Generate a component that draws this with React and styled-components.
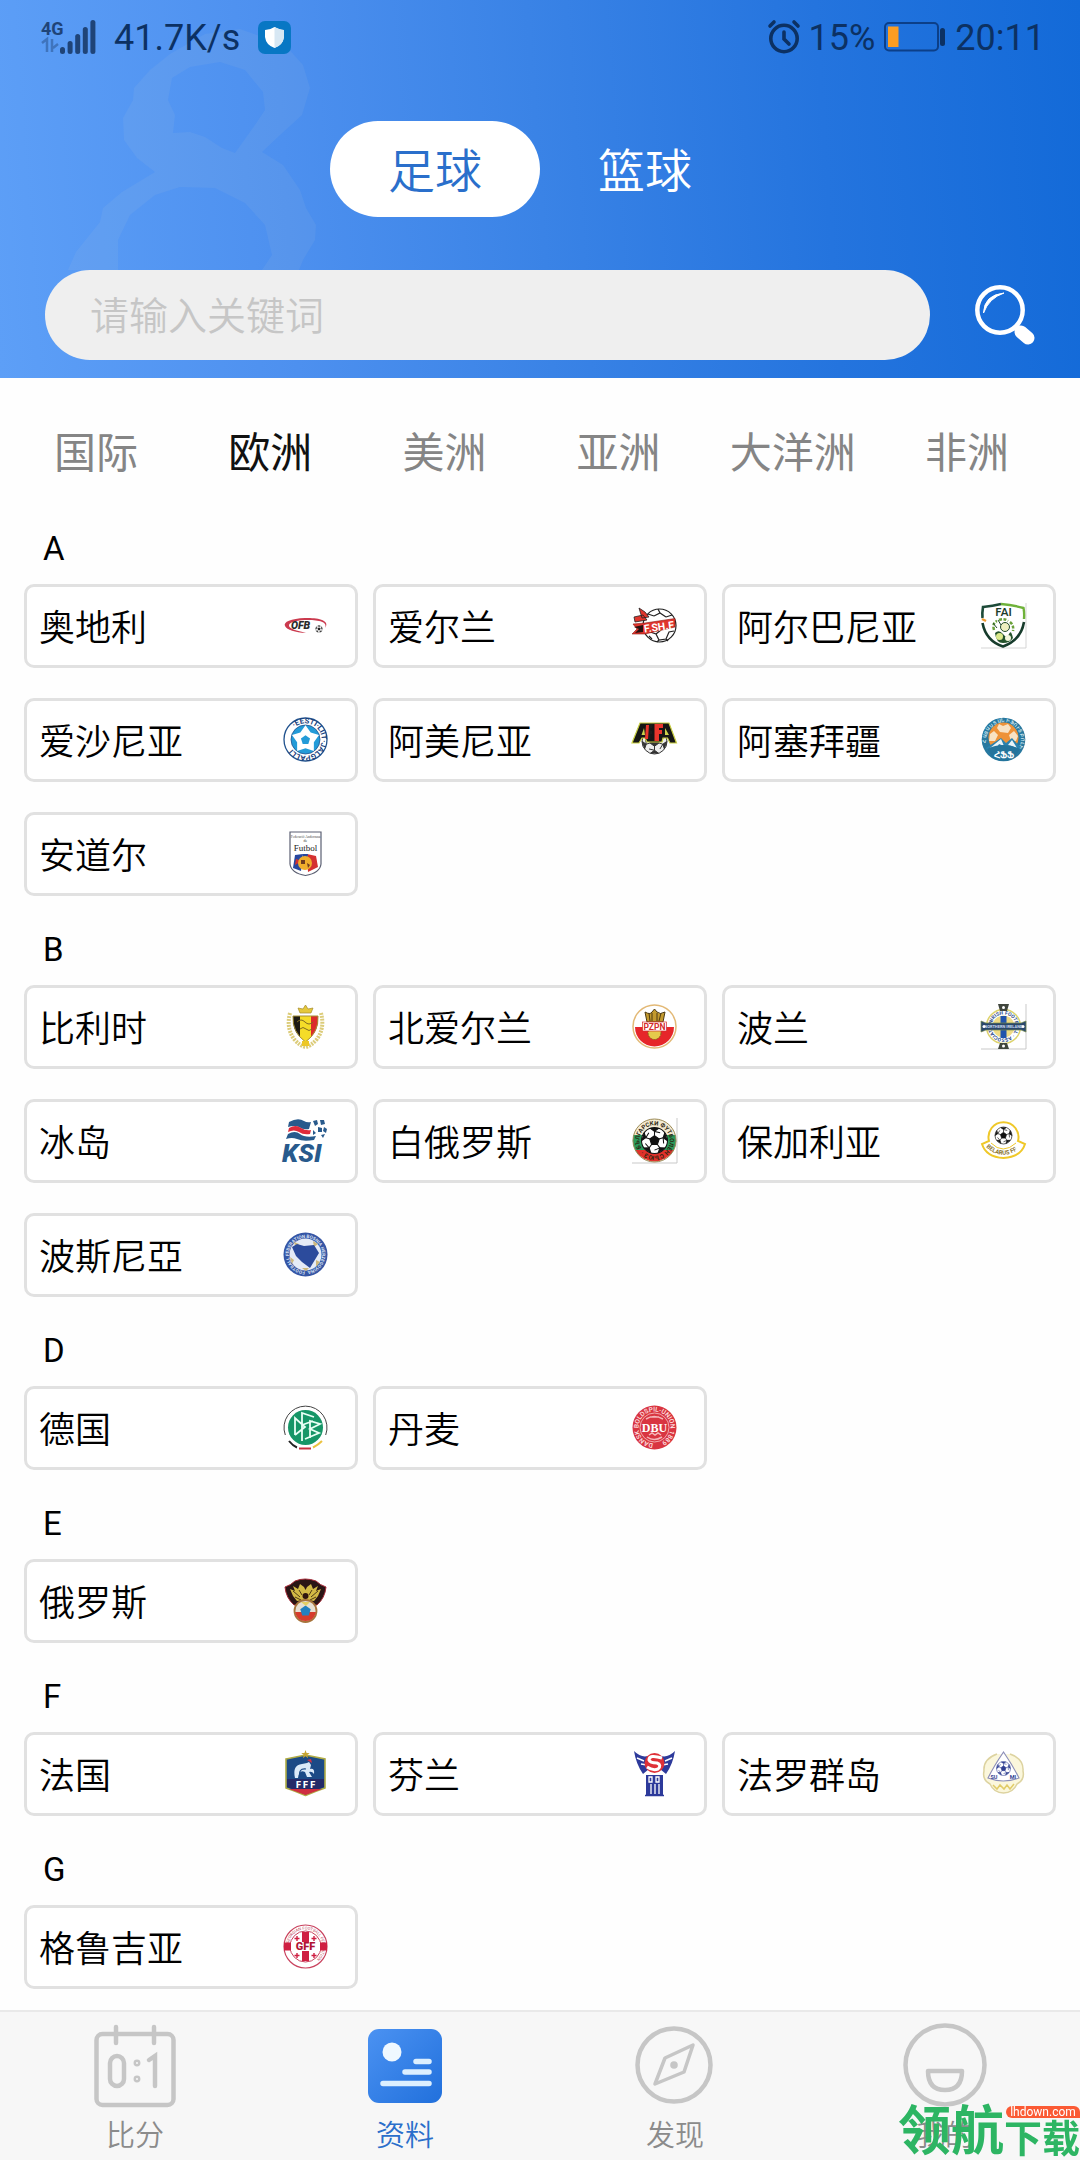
import React, { useState } from "react";
import styled, { createGlobalStyle } from "styled-components";

const GlobalStyle = createGlobalStyle`
  * { box-sizing: border-box; }
  body {
    margin: 0;
    background: #fefefe;
    font-family: Roboto, "Noto Sans CJK SC", sans-serif;
  }
  button, input { font: inherit; }
`;

const Page = styled.div`
  position: relative;
  min-height: 100vh;
  display: flex;
  flex-direction: column;
`;

const Header = styled.header`
  position: relative;
  background: linear-gradient(86deg, #5d9ff7 0%, #4d90ef 27%, #3a83e6 50%, #2474de 76%, #136ad8 100%);
  padding-bottom: 18px;
`;

const Backdrop = styled.svg`
  position: absolute;
  left: 0;
  top: 0;
  pointer-events: none;
`;

const StatusBar = styled.div`
  position: relative;
  height: 74px;
  padding: 0 35px 0 40px;
  display: flex;
  align-items: center;
  justify-content: space-between;
  font-size: 36px;
  color: #0c3163;
`;

const StatusGroup = styled.div`
  display: flex;
  align-items: center;
  gap: ${(p) => p.$gap}px;
  svg { display: block; overflow: visible; }
  span { padding-top: 2px; }
`;

const SportSwitch = styled.div`
  position: relative;
  display: flex;
  justify-content: center;
  margin-top: 47px;
`;

const SportButton = styled.button`
  width: 210px;
  height: 96px;
  border: 0;
  border-radius: 48px;
  padding: 0 0 4px;
  font-size: 47px;
  font-weight: 350;
  background: ${(p) => (p.$active ? "#fff" : "transparent")};
  color: ${(p) => (p.$active ? "#2a6fcb" : "#fff")};
`;

const SearchForm = styled.form`
  position: relative;
  display: flex;
  align-items: center;
  gap: 45px;
  margin-top: 53px;
  padding: 0 45px;
`;

const SearchInput = styled.input`
  flex: 1;
  min-width: 0;
  height: 90px;
  border: 0;
  border-radius: 45px;
  padding: 4px 45px 0;
  font-size: 39px;
  font-weight: 350;
  color: #333;
  background: #efefef;
  &::placeholder { color: #c6c6c6; opacity: 1; }
`;

const SearchButton = styled.button`
  width: 60px;
  height: 60px;
  padding: 0;
  border: 0;
  background: none;
  svg { display: block; }
`;

const RegionTabs = styled.nav`
  display: grid;
  grid-template-columns: repeat(6, 1fr);
  height: 148px;
  padding: 0 26px 0 9px;
`;

const RegionTab = styled.button`
  border: 0;
  padding: 0 0 6px;
  background: none;
  white-space: nowrap;
  font-size: 42px;
  font-weight: 400;
  color: ${(p) => (p.$active ? "#111" : "#858585")};
`;

const Main = styled.main`
  flex: 1;
  display: flex;
  flex-direction: column;
  gap: 34px;
  padding: 3px 24px 20px;
`;

const Group = styled.section`
  display: flex;
  flex-direction: column;
  gap: 15px;
`;

const GroupTitle = styled.h2`
  margin: 0;
  padding-left: 19px;
  font-size: 33px;
  line-height: 40px;
  font-weight: 400;
  color: #000;
`;

const CardGrid = styled.div`
  display: grid;
  grid-template-columns: repeat(3, 1fr);
  gap: 30px 15px;
`;

const Card = styled.button`
  height: 84px;
  display: flex;
  align-items: center;
  justify-content: space-between;
  padding: 0 27px 2px 12px;
  border: 3px solid #e1e1e1;
  border-radius: 10px;
  background: #fff;
  font-size: 36px;
  font-weight: 350;
  color: #000;
  svg { display: block; flex: none; overflow: visible; }
`;

const TabBar = styled.nav`
  position: sticky;
  bottom: 0;
  display: grid;
  grid-template-columns: repeat(4, 1fr);
  height: 150px;
  border-top: 2px solid #e9e9e9;
  background: #f7f7f7;
`;

const TabLink = styled.a`
  display: flex;
  flex-direction: column;
  align-items: center;
  padding-top: 10px;
  text-decoration: none;
  font-size: 29px;
  line-height: 40px;
  font-weight: 350;
  color: ${(p) => (p.$active ? "#2a6fcb" : "#8b8b8b")};
  svg { display: block; margin-bottom: 6px; }
`;

const Stamp = styled.div`
  position: absolute;
  right: 0;
  bottom: 0;
  display: flex;
  align-items: flex-end;
  height: 56px;
  font-weight: 700;
  line-height: 1;
  color: #2db563;
  white-space: nowrap;
  pointer-events: none;
`;

const StampBig = styled.span`
  font-size: 53px;
  line-height: 56px;
`;

const StampSide = styled.span`
  display: flex;
  flex-direction: column;
  align-items: stretch;
`;

const StampTag = styled.span`
  align-self: flex-end;
  width: 74px;
  height: 12px;
  border-radius: 6px 6px 0 6px;
  background: #fb5a34;
  color: #fff;
  font: 400 12px/12px Roboto, sans-serif;
  text-align: center;
`;

const StampSmall = styled.span`
  font-size: 38px;
  line-height: 42px;
`;

const pt = (cx, cy, r, deg) => {
  const a = ((deg - 90) * Math.PI) / 180;
  return [cx + r * Math.cos(a), cy + r * Math.sin(a)];
};
const poly = (cx, cy, r, n = 5, rot = 0) =>
  Array.from({ length: n }, (_, i) => pt(cx, cy, r, rot + (i * 360) / n).join(",")).join(" ");
const star = (cx, cy, r, inner) =>
  Array.from({ length: 10 }, (_, i) => pt(cx, cy, i % 2 ? inner : r, i * 36).join(",")).join(" ");

function Ball({ cx, cy, r, ink = "#111", fill = "#fff", rot = 0 }) {
  return (
    <g stroke={ink} strokeWidth={r * 0.08} fill={ink}>
      <circle cx={cx} cy={cy} r={r} fill={fill} />
      {[0, 72, 144, 216, 288].map((d) => {
        const a = pt(cx, cy, r * 0.36, d + rot);
        const b = pt(cx, cy, r * 0.7, d + rot);
        const c = pt(cx, cy, r * 0.74, d + 36 + rot);
        const e = pt(cx, cy, r * 0.97, d - 18 + rot);
        const f = pt(cx, cy, r * 0.97, d + 18 + rot);
        return (
          <g key={d}>
            <path d={`M${a} L${b} L${c}`} fill="none" />
            <path d={`M${b} L${e} L${f} Z`} />
          </g>
        );
      })}
      <polygon points={poly(cx, cy, r * 0.38, 5, rot)} />
    </g>
  );
}

function Ring({ id, r, text, size, color, from = 0, weight = 700, cx = 22.5, cy = 22.5 }) {
  const [x, y] = pt(cx, cy, r, from);
  const [x2, y2] = pt(cx, cy, r, from + 180);
  return (
    <>
      <path id={id} d={`M${x} ${y} A${r} ${r} 0 0 1 ${x2} ${y2} A${r} ${r} 0 0 1 ${x} ${y}`} fill="none" />
      <text fontSize={size} fill={color} fontWeight={weight}>
        <textPath href={`#${id}`}>{text}</textPath>
      </text>
    </>
  );
}

const emblems = {
  ofb: (
    <>
      <path d="M42 25 C48 17 34 14.500 22 15 C8 15.500 0 19 2 23 C4 27 12 29.500 23 30 C14 27.500 6 26 6 22.500 C6 18.500 16 17 25 17 C36 17 45 19 42 25Z" fill="#cb3a4e" />
      <text x="8" y="26" fontSize="10.500" fontWeight="900" fontStyle="italic" fill="#2b2b2b">OFB</text>
      <Ball cx={36} cy={26} r={3.4} />
    </>
  ),
  fshf: (
    <>
      <circle cx="27.500" cy="22.500" r="16.500" fill="#fff" stroke="#222" strokeWidth="1.200" />
      <path d="M22 13 L28 10 L34 14 M28 10 L26 6 M34 14 L40 12 M22 13 L16 11 M18 29 L24 31 L27 37 L34 36 L37 29 L42 28 M24 31 L29 27 M27 37 L25 39 M34 36 L36 38 M17 33 L20 36" stroke="#222" strokeWidth="1.200" fill="none" />
      <path d="M7 5 L13 9 L17 14 L10 15 Z M2 14 L11 12 L15 17 L3 19Z" fill="#e0352c" stroke="#222" strokeWidth=".8" />
      <path d="M1 21 L13 20 L43 15.500 L43 24 L13 31 L0 31 L5 26 Z" fill="#e0352c" stroke="#8c1712" strokeWidth=".6" />
      <path d="M2 24 L11 22 V29 L3 30 L7 26Z" fill="#271110" />
      <text x="12.500" y="29.500" fontSize="10.500" fontWeight="700" fill="#fff" transform="rotate(-8 13 29)">F.SH.F</text>
    </>
  ),
  fai: (
    <>
      <path d="M45 0 V45 H0" fill="none" stroke="#d5d5d5" />
      <path d="M2 5 Q12 3 22 1 Q32 3 43 5 Q45 18 41 27 Q36 39 22 44.500 Q8 39 3.500 27 Q0 18 2 5Z" fill="#fff" />
      <path d="M1.500 15 Q1 10 2 4 Q12 3 20 1" fill="none" stroke="#1d4a38" strokeWidth="2.600" />
      <path d="M20 1 Q32 2 42.500 5 Q43.500 10 43 16" fill="none" stroke="#6fb23a" strokeWidth="2.400" />
      <path d="M1.500 20 Q5 38 22 43.500 Q40 37 43 19" fill="none" stroke="#173c2c" strokeWidth="2.600" />
      <path d="M1 16 l4 2" stroke="#f09a32" strokeWidth="2.500" />
      <text x="22.500" y="13" fontSize="11" fontWeight="700" textAnchor="middle" fill="#1c3c2c" fontFamily="Lato">FAI</text>
      <path d="M13 27 Q11 20 16 18 M18 17 Q23 15 27 18 M29 19 Q33 22 32 28" fill="none" stroke="#6aa13a" strokeWidth="2.500" strokeDasharray="3 1.500" />
      <circle cx="24" cy="24" r="4.500" fill="#eef0c0" stroke="#20492c" />
      <path d="M14 30 q4-4 8 1 t6 0 t4 4 q-3 5-10 5 t-8-10" fill="#24532c" />
      <circle cx="18.500" cy="33.500" r="3.500" fill="#dbe98c" /><circle cx="27" cy="35" r="3" fill="#f2f6dc" />
      <path d="M12 20 l4 5 M17 17 l3 5" stroke="#20492c" />
    </>
  ),
  eesti: (
    <>
      <circle cx="22.500" cy="22.500" r="21.500" fill="#fff" stroke="#20528e" strokeWidth="1.300" />
      <circle cx="22.500" cy="22.500" r="14.500" fill="#239bd8" stroke="#20528e" strokeWidth=".8" />
      <polygon points={star(22.5, 22.5, 14.2, 8.8)} fill="#fff" />
      <polygon points={poly(22.5, 23, 4.8)} fill="#239bd8" />
      <Ring id="rEesti" r={16.2} from={-42} text="·EESTI·LIIT·JALGPALLI" size="7.500" color="#183f7c" />
    </>
  ),
  affa: (
    <>
      <Ball cx={22.5} cy={24.5} r={12.5} ink="#333" fill="#eee" rot={36} />
      <path d="M8 6 H37 L44.500 26 H38 L35.500 21 H31 L30 25 H15 L13 21 H10 L7 26 H0Z" fill="#151515" stroke="#c9cf43" strokeWidth="1.200" />
      <path d="M15 7 H21 L20 11 H18.500 V14 H20 V17 H18.500 V22 H14.500Z" fill="#1b1b1b" />
      <path d="M22.500 7 H31 V11 H27 V13 H30 V17 H27 V24 H22.500Z M14 8 H17 L16 22 H13Z" fill="#e9352c" />
      <path d="M9.500 18 l2.500-7 1 7z M33 18 l0-7 4 7z" fill="#cbd24b" />
    </>
  ),
  arm: (
    <>
      <circle cx="22.500" cy="22.500" r="21.800" fill="#28789f" />
      <circle cx="22.500" cy="20.500" r="15" fill="#ee9238" />
      <path d="M18 7 l4 2 5-2 3 4-3 5-8-1-3-4z M9 17l4-3 4 4-3 6-6 0z M28 18l5-4 4 5-2 5-5 0z" fill="#f8e2c4" />
      <path d="M5 31 L20 21 L25 26 L31 21 L40 31 L36 38 H9Z" fill="#2b82ae" />
      <path d="M9 31 L20 22 L23 29 L18 27 L14 34Z M27 28 L31 23 L36 31 L31 29Z" fill="#eaf4f8" />
      <path d="M6 32 Q22 24 39 32 Q34 44 22 44 Q11 44 6 32Z" fill="#24749c" />
      <text x="22.500" y="41" fontSize="9" fontWeight="700" textAnchor="middle" fill="#fff">ՀՖՖ</text>
      <Ring id="rArm" r={17.3} from={-100} text="ՀԱՅԱՍՏԱՆԻ ՖՈՒՏԲՈԼԻ" size="4.600" color="#d7ebf3" />
    </>
  ),
  andorra: (
    <>
      <path d="M7 1 H38 V33 Q37 42 22.500 44.500 Q8 42 7 33Z" fill="#fff" stroke="#5b5f72" strokeWidth="1.200" />
      <text x="22.500" y="7" fontSize="3.500" textAnchor="middle" fill="#444" fontFamily="Liberation Serif">Federació Andorrana</text>
      <text x="22.500" y="11" fontSize="4" textAnchor="middle" fill="#333" fontFamily="Liberation Serif">de</text>
      <text x="22.500" y="20" fontSize="9" textAnchor="middle" fill="#222" fontFamily="Liberation Serif">Futbol</text>
      <path d="M12 24 L20 23 L18 40 L10 37Z" fill="#27479e" />
      <path d="M24 23 L33 25 L35 36 L25 41Z" fill="#d43131" />
      <path d="M13 28 L19 30 L12 34Z" fill="#d43131" />
      <path d="M20 23 L25 23 L24 28 L20 28Z" fill="#27479e" />
      <circle cx="22" cy="32" r="7" fill="#f0ae2c" />
      <path d="M18 29 h4 v4 h-4z M24 32 l3 2-2 3z" fill="#703c1e" />
    </>
  ),
  belgium: (
    <>
      <path d="M7 9 Q3 24 11 35 Q17 42 22.500 43 Q28 42 34 35 Q42 24 38 9" fill="none" stroke="#dccc7a" strokeWidth="4" strokeDasharray="2 1" />
      <path d="M10 12 H35 Q36 28 22.500 38 Q9 28 10 12Z" fill="#f5dc28" />
      <path d="M10 12 H17 V33 Q9 26 10 12Z" fill="#1d1a14" />
      <path d="M28 12 H35 Q36 26 28 33Z" fill="#dc2a2c" />
      <path d="M10 12 H35 Q36 28 22.500 38 Q9 28 10 12Z" fill="none" stroke="#a58f34" />
      <path d="M17 9 L15 4 L20 5 L22.500 1 L25 5 L30 4 L28 9Z" fill="#e5c83b" stroke="#a58b2b" strokeWidth=".7" />
      <path d="M14 18 q4-4 8 0 t8 0 M17 25 q3-3 6 0 t6 0" stroke="#806b20" fill="none" />
      <path d="M19 37 h7 v5 h-7z" fill="#edc726" />
    </>
  ),
  pzpn: (
    <>
      <circle cx="22.500" cy="22.500" r="21.500" fill="#fff" stroke="#e3b976" strokeWidth="1.500" />
      <path d="M3 23 H42 A19.500 19.500 0 0 1 3 23Z" fill="#e6262a" />
      <path d="M13 8 Q18 11 20 8 L22.500 5 L25 8 Q28 11 33 8 L31 18 H15Z" fill="#c39a2e" stroke="#4d3a12" />
      <path d="M17 9 l1 8 M20 9 v8 M25 9v8 M29 9 l-2 8" stroke="#4d3a12" />
      <circle cx="22.500" cy="29" r="6.500" fill="#e5c94b" stroke="#86621c" strokeDasharray="2 1" />
      <rect x="10.500" y="18" width="24" height="9" fill="#fff" stroke="#d52b2b" strokeWidth=".7" />
      <text x="22.500" y="25.700" fontSize="8.500" fontWeight="700" textAnchor="middle" fill="#d52b2b">PZPN</text>
    </>
  ),
  nireland: (
    <>
      <path d="M45 0 V45 H0" fill="none" stroke="#c9c9c9" />
      <circle cx="22.500" cy="22.500" r="17" fill="#fff" stroke="#ddd36b" strokeWidth="1.500" />
      <circle cx="22.500" cy="22.500" r="11" fill="#efdc86" />
      <Ring id="rIfa" r={12} from={-62} text="IRISH FOOTBALL · ASSOCIATION" size="5" color="#28498c" />
      <path d="M17 0 H28 L26 7 H19Z M17 45 H28 L26 39 H19Z" fill="#40463d" />
      <path d="M19.500 12 H25.500 V34 H19.500Z" fill="#2154ad" />
      <path d="M0 17 L5 19 H40 L45 17 V28 L40 26 H5 L0 28Z" fill="#29476c" stroke="#768b4d" strokeWidth=".7" />
      <text x="22.500" y="24" fontSize="4" fontWeight="700" textAnchor="middle" fill="#c9dcf2">NORTHERN IRELAND</text>
      <circle cx="3" cy="22.500" r="1.500" fill="#fff" /><circle cx="42" cy="22.500" r="1.500" fill="#fff" /><circle cx="22.500" cy="3.500" r="1.500" fill="#fff" /><circle cx="22.500" cy="42" r="1.500" fill="#fff" />
    </>
  ),
  ksi: (
    <>
      <path d="M6 4 Q15 -1 21 3 Q24 5 28 4 L26 11 Q20 12 16 9 Q11 7 5 9Z" fill="#285a8c" />
      <path d="M6 10 Q13 6 18 10 Q23 13 28 12 L27 16 Q20 17 16 14 Q11 11 5 14Z" fill="#de2a3a" />
      <path d="M5 16 Q12 12 17 16 Q22 20 33 18 L31 22 Q20 24 14 21 Q9 19 3 21Z" fill="#285a8c" />
      <circle cx="37" cy="11" r="7.500" fill="#fff" />
      <path d="M30 3 l4-1 1 4-3 2z M37 2l4 0 1 4-4 1z M41 9l3 2-1 4-3-2z M35 9l4 1 0 4-4 0z M30 12l3 3-3 2z M38 17l4-1-2 4z" fill="#285a8c" />
      <text x="-1" y="43.500" fontSize="26" fontWeight="900" fontStyle="italic" fill="#285a8c">KSI</text>
    </>
  ),
  bulgaria: (
    <>
      <path d="M45 0 V45 H0" fill="none" stroke="#c9c9c9" />
      <circle cx="22.500" cy="22.500" r="21.500" fill="#f3ead2" />
      <path d="M1.500 17 A21.500 21.500 0 0 0 8 38 L37 38 A21.500 21.500 0 0 0 43.500 17Z" fill="#2a9a5b" />
      <path d="M3.500 32 A21.500 21.500 0 0 0 41.500 32Z" fill="#e0312b" />
      <circle cx="22.500" cy="22.500" r="21.500" fill="none" stroke="#9b8a56" />
      <Ball cx={22.5} cy={22.5} r={13} />
      <Ring id="rBul" r={15.2} from={-120} text="БЪЛГАРСКИ ФУТБОЛЕН СЪЮЗ ·" size="6" color="#2c2510" />
    </>
  ),
  belarus: (
    <>
      <path d="M8 23 A15 15 0 1 1 37 23 L44 26 Q40 39 22.500 40 Q5 39 1 26Z" fill="#fff" stroke="#efc829" strokeWidth="2" />
      <path d="M10 25 Q22 37 35 25" fill="none" stroke="#efc829" strokeWidth="1" />
      <Ball cx={22.5} cy={17.5} r={8.5} />
      <path id="rBel" d="M5 29 Q22.500 45 42 28" fill="none" />
      <text fontSize="6" fontWeight="700" fill="#8b7430"><textPath href="#rBel">BELARUS FF</textPath></text>
    </>
  ),
  bosnia: (
    <>
      <circle cx="22.500" cy="22.500" r="22" fill="#3656a5" />
      <Ring id="rBos" r={16.6} from={-178} text="FOOTBALL FEDERATION BOSNIA HERZEGOVINA" size="4.600" color="#d9e1f3" />
      <circle cx="22.500" cy="22.500" r="16" fill="#e5ebf6" />
      <path d="M11 10 l5 2-3 5z M30 9l5 3-4 3z M33 28l4 2-4 5z M7 25l4 3-2 4z M19 36 l7 0-3 3z" fill="#cdb87c" />
      <path d="M9 15 L14 12 L21 14 L31 13 L36 21 L33 26 L27 36 L19 30 L13 24Z" fill="#2c4b9c" />
    </>
  ),
  dfb: (
    <>
      <circle cx="22.500" cy="22.500" r="21.500" fill="#fff" />
      <path d="M2.300 30 A21.500 21.500 0 1 1 42.700 30" fill="none" stroke="#444" strokeWidth="1" />
      <path d="M6 36 Q10 41 14 42.500" fill="none" stroke="#222" strokeWidth="2" />
      <path d="M16 43.500 H28" stroke="#c6303e" strokeWidth="2" />
      <path d="M30 42.500 Q35 40 39 36" fill="none" stroke="#ecc340" strokeWidth="2" />
      <circle cx="22.500" cy="22.500" r="17.500" fill="#169667" />
      <path d="M12 30 V13 L22 22 L12 30 M19 36 V8 L31 12 M19 20 L30 16 M27 33 V16 L37 19 L27 24 L36 28 L22 34" fill="none" stroke="#e9fff5" strokeWidth="1.800" />
    </>
  ),
  dbu: (
    <>
      <circle cx="22.500" cy="22.500" r="22" fill="#d93541" />
      <Ring id="rDbu" r={16} from={-175} text="DANSK BOLDSPIL-UNION 1889" size="6.500" color="#ffe6e6" weight={500} />
      <circle cx="22.500" cy="22.500" r="14.500" fill="none" stroke="#f9c5c7" strokeWidth=".8" />
      <path d="M14 14 q8-5 17 0 M15 32 q7 5 15 0 M18 12h9 M17 30 l3-2 3 2 3-2 3 2" stroke="#f5b5b9" fill="none" strokeWidth="1.500" />
      <text x="22.500" y="27" fontSize="12" fontWeight="700" textAnchor="middle" fill="#fff" fontFamily="Liberation Serif">DBU</text>
    </>
  ),
  russia: (
    <>
      <path d="M2 9 Q8 7 12 3 Q22 -1 33 3 Q37 7 43 9 Q42 20 34 27 H11 Q3 20 2 9Z" fill="#2a1515" stroke="#a62a38" strokeWidth="1" />
      <path d="M7 11 L12 13 L10 8 L15 11 L17 6 L21 9 L22.500 12 L24 9 L28 6 L30 11 L35 8 L33 13 L38 11 L35 18 L31 23 L25 22 L22.500 27 L20 22 L14 23 L10 18Z" fill="#d2b945" />
      <path d="M10 13 l7 6 M12 19 l6 3 M35 13 l-7 6 M33 19 l-6 3 M16 12 l3 5 M29 12 l-3 5" stroke="#4e3a16" />
      <circle cx="22.500" cy="18" r="3" fill="#30160f" />
      <circle cx="22.500" cy="33" r="11" fill="#e7dfd2" stroke="#a7743c" strokeWidth="1.800" />
      <path d="M12 34 H33 Q31 43 22.500 43 Q14 43 12 34Z" fill="#d63b2c" />
      <polygon points={poly(22.5, 33, 5.5)} fill="#2480c0" />
      <path d="M18 24 h9 l-4 4z" fill="#e5ce64" />
    </>
  ),
  france: (
    <>
      <path d="M3 8 L22.500 4 L42 8 V37 Q33 40 22.500 44.500 Q12 40 3 37Z" fill="#1c4a86" stroke="#b0ac45" strokeWidth="1.600" />
      <path d="M4 28 H41 V36 Q32 39 22.500 43 Q12 39 4 36Z" fill="#242a68" />
      <path d="M6 38 H39 L22.500 44Z" fill="#cf2e40" />
      <polygon points={star(22.5, 3.5, 4.5, 1.8)} fill="#c6a432" />
      <path d="M12 27 Q9 14 19 13 L24 12 L26 11 L28 14 L27 18 Q32 17 31 23 Q29 20 26 21 L29 26 H24 L22 21 Q16 18 15 27 Z" fill="#dceaf8" />
      <path d="M17 26 Q15 17 23 18" stroke="#1c4a86" strokeWidth="1.200" fill="none" />
      <path d="M24 9 l4-1 1 4z" fill="#d63245" />
      <text x="22.500" y="37" fontSize="9" fontWeight="900" textAnchor="middle" fill="#fff">F F F</text>
    </>
  ),
  faroe: (
    <>
      <path d="M2 0 Q9 7 16 5 L17 18 L11 23 Q4 13 2 0Z M43 0 Q36 7 29 5 L28 18 L34 23 Q41 13 43 0Z" fill="#2d3a9b" />
      <path d="M5 7 l7 3 M9 13 l6 1 M40 7 l-7 3 M36 13 l-6 1" stroke="#fff" strokeWidth="1.500" />
      <circle cx="22.500" cy="12" r="10" fill="#df3138" />
      <path d="M30 7 Q17 3 17 9 Q18 12 25 12 Q30 14 26 18 Q21 20 15 16" fill="none" stroke="#fff" strokeWidth="3" />
      <path d="M14 24 H31 V44 H14Z" fill="#2d3a9b" />
      <path d="M17 26 h3 v5 h-3z M24 26 h3 v5 h-3z M19 33 v10 M23 33 v10 M27 33 v10" stroke="#fff" fill="none" strokeWidth="1.300" />
      <path d="M13 44.500 H32" stroke="#2d3a9b" strokeWidth="1.500" />
    </>
  ),
  finland: (
    <>
      <path d="M16 3 Q2 8 3 20 Q1 29 9 33 Q13 42 22.500 42 Q32 42 36 33 Q44 29 42 20 Q43 8 29 3" fill="#fbf7dc" stroke="#ddd3a0" strokeWidth="1.500" />
      <path d="M22.500 1 Q32 15 38 27 Q22 33 7 27 Q13 15 22.500 1Z" fill="#fff" stroke="#8d8fb8" strokeWidth="1.200" />
      <Ball cx={22.5} cy={17.5} r={7} ink="#2f3e91" />
      <text x="13" y="27.500" fontSize="5.500" fontWeight="700" textAnchor="middle" fill="#2f3e91">SU</text>
      <text x="32" y="27.500" fontSize="5.500" fontWeight="700" textAnchor="middle" fill="#2f3e91">MI</text>
      <path d="M12 34 l4 4 3-4 4 4 3-4 3 4 4-5" stroke="#e1cc69" fill="none" strokeWidth="1.500" />
    </>
  ),
  georgia: (
    <>
      <circle cx="22.500" cy="22.500" r="21.500" fill="#fff" stroke="#c9425e" strokeWidth="1.200" />
      <Ring id="rGeo" r={17} from={-80} text="GEORGIAN FOOTBALL FEDERATION" size="4" color="#c14c63" weight={400} />
      <circle cx="22.500" cy="22.500" r="15.500" fill="#fff" stroke="#c9425e" />
      <path d="M19 8 H26 V37 H19Z" fill="#cf1f42" />
      <path d="M1 18.500 H44 V26.500 H1Z" fill="#cf1f42" />
      <path d="M8 18 H37 V27 H8Z" fill="#fff" />
      <text x="22.500" y="26.200" fontSize="11" fontWeight="900" textAnchor="middle" fill="#b01434">GFF</text>
      <path d="M14 12 v5 M11.500 14.500 h5 M31 12 v5 M28.500 14.500 h5 M14 29 v5 M11.500 31.500 h5 M31 29 v5 M28.500 31.500 h5" stroke="#cf1f42" strokeWidth="1.400" />
    </>
  ),
};

const groups = [
  ["A", [["奥地利", "ofb"], ["爱尔兰", "fshf"], ["阿尔巴尼亚", "fai"], ["爱沙尼亚", "eesti"], ["阿美尼亚", "affa"], ["阿塞拜疆", "arm"], ["安道尔", "andorra"]]],
  ["B", [["比利时", "belgium"], ["北爱尔兰", "pzpn"], ["波兰", "nireland"], ["冰岛", "ksi"], ["白俄罗斯", "bulgaria"], ["保加利亚", "belarus"], ["波斯尼亞", "bosnia"]]],
  ["D", [["德国", "dfb"], ["丹麦", "dbu"]]],
  ["E", [["俄罗斯", "russia"]]],
  ["F", [["法国", "france"], ["芬兰", "faroe"], ["法罗群岛", "finland"]]],
  ["G", [["格鲁吉亚", "georgia"]]],
];

const tabIcons = {
  score: (
    <g fill="none" stroke="#c6c6c6" strokeWidth="4.500" strokeLinecap="round">
      <rect x="4.500" y="12" width="77" height="71" rx="6" />
      <path d="M24 5 V21 M62 5 V21" />
      <rect x="18" y="34" width="14" height="30" rx="7" />
      <path d="M57 38 L63 34 V64" />
      <circle cx="45" cy="41" r="1.200" /><circle cx="45" cy="57" r="1.200" />
    </g>
  ),
  data: (
    <g>
      <defs>
        <linearGradient id="docFill" x1="0" y1="0" x2="1" y2="1">
          <stop offset="0" stopColor="#4b92f2" /><stop offset="1" stopColor="#2170dc" />
        </linearGradient>
      </defs>
      <rect x="6" y="7" width="74" height="74" rx="11" fill="url(#docFill)" />
      <circle cx="30" cy="30" r="9.500" fill="#eff8ff" />
      <path d="M54 39.500 H67 M43 50 H67 M21 61.500 H67" stroke="#dcefff" strokeWidth="5.500" strokeLinecap="round" />
    </g>
  ),
  discover: (
    <g fill="none" stroke="#c6c6c6" strokeWidth="4.500" strokeLinejoin="round">
      <circle cx="42" cy="43" r="36.500" />
      <path d="M61 23 L52 50 L23 62 L33 36 Z" strokeWidth="3.500" />
      <circle cx="42" cy="43" r="3.800" fill="#c6c6c6" stroke="none" />
    </g>
  ),
  me: (
    <g fill="none" stroke="#c6c6c6" strokeWidth="4.500" strokeLinejoin="round">
      <circle cx="43" cy="43" r="39.500" />
      <path d="M26 49 H60 Q60 68 43 68 Q26 68 26 49Z" />
    </g>
  ),
};

export default function App() {
  const [sport, setSport] = useState("足球");
  const [region, setRegion] = useState("欧洲");

  return (
    <Page>
      <GlobalStyle />
      <Header>
        <Backdrop width="340" height="270" viewBox="0 0 340 270" aria-hidden="true">
          <path
            fillRule="evenodd"
            fill="#ffe9d0"
            fillOpacity=".06"
            d="M68 270 L76 252 L100 222 L103 208 L122 192 L155 172 L137 158 L124 140 L123 118 L133 100 L134 88 L150 70 L170 54 L205 34 L240 29 L285 45 L303 65 L310 88 L302 115 L280 135 L262 152 L283 165 L300 190 L306 208 L316 225 L315 240 L303 260 L299 270Z
               M172 78 L190 67 L220 62 L245 70 L263 92 L265 110 L255 125 L235 153 L222 148 L205 137 L190 132 L173 133 L175 115 L168 100Z
               M118 270 L118 240 L130 215 L155 195 L180 187 L215 188 L245 203 L265 225 L272 255 L262 270Z"
          />
        </Backdrop>
        <StatusBar>
          <StatusGroup $gap={18}>
            <svg width="56" height="36" viewBox="0 0 56 36" fill="#1f4478">
              <text x="1" y="16" fontSize="18" fontWeight="700">4G</text>
              <path d="M2 24 l5-4 v13 M12 20 v13 M13 29 l5-4" stroke="#3f74bd" strokeWidth="2.500" fill="none" />
              <rect x="20" y="28" width="5" height="7" rx="2.500" />
              <rect x="27.600" y="22" width="5" height="13" rx="2.500" />
              <rect x="35.200" y="15" width="5" height="20" rx="2.500" />
              <rect x="42.800" y="8" width="5" height="27" rx="2.500" />
              <rect x="50.400" y="1" width="5" height="34" rx="2.500" />
            </svg>
            <span>41.7K/s</span>
            <svg width="33" height="33" viewBox="0 0 33 33">
              <rect width="33" height="33" rx="7" fill="#0877c4" />
              <path d="M16.500 6 Q22 9 26 9 V16 Q25 24 16.500 27 Q8 24 7 16 V9 Q12 9 16.500 6Z" fill="#fff" />
              <path d="M16.500 6 Q22 9 26 9 V16 Q25 24 16.500 27Z" fill="#d7e7f3" />
            </svg>
          </StatusGroup>
          <StatusGroup $gap={9}>
            <svg width="32" height="34" viewBox="0 0 32 34" fill="none" stroke="#0c3163" strokeWidth="3.600" strokeLinecap="round">
              <circle cx="16" cy="18.500" r="13.200" />
              <path d="M16 12 V19 L21 24 M2 6 L6 2 M30 6 L26 2" />
            </svg>
            <span>15%</span>
            <svg width="62" height="30" viewBox="0 0 62 30">
              <rect x="1" y="1" width="53" height="27.500" rx="4" fill="none" stroke="#0c3f88" strokeWidth="2" />
              <rect x="4" y="4.500" width="10.500" height="20.500" fill="#fb9d22" />
              <rect x="56" y="6" width="5" height="18" rx="2.500" fill="#0c3163" />
            </svg>
            <span>20:11</span>
          </StatusGroup>
        </StatusBar>
        <SportSwitch>
          {["足球", "篮球"].map((s) => (
            <SportButton key={s} type="button" $active={s === sport} aria-pressed={s === sport} onClick={() => setSport(s)}>
              {s}
            </SportButton>
          ))}
        </SportSwitch>
        <SearchForm onSubmit={(e) => e.preventDefault()}>
          <SearchInput type="text" placeholder="请输入关键词" aria-label="请输入关键词" />
          <SearchButton type="submit" aria-label="搜索">
            <svg width="60" height="60" viewBox="0 0 60 60" fill="none" stroke="#fff">
              <circle cx="25" cy="25" r="22.700" strokeWidth="4.500" />
              <path d="M8.500 28 Q9 10 29 8 Q14 13 8.500 28Z" fill="#fff" strokeWidth="1" />
              <path d="M40 41 L44 45" strokeWidth="7" />
              <path d="M46 47 L53 53" strokeWidth="13" strokeLinecap="round" />
            </svg>
          </SearchButton>
        </SearchForm>
      </Header>

      <RegionTabs>
        {["国际", "欧洲", "美洲", "亚洲", "大洋洲", "非洲"].map((r) => (
          <RegionTab key={r} type="button" $active={r === region} aria-pressed={r === region} onClick={() => setRegion(r)}>
            {r}
          </RegionTab>
        ))}
      </RegionTabs>

      <Main>
        {groups.map(([letter, teams]) => (
          <Group key={letter}>
            <GroupTitle>{letter}</GroupTitle>
            <CardGrid>
              {teams.map(([name, emblem]) => (
                <Card key={name} type="button">
                  {name}
                  <svg width="45" height="45" viewBox="0 0 45 45" aria-hidden="true">{emblems[emblem]}</svg>
                </Card>
              ))}
            </CardGrid>
          </Group>
        ))}
      </Main>

      <TabBar>
        {[["比分", "score"], ["资料", "data"], ["发现", "discover"], ["我的", "me"]].map(([label, icon]) => (
          <TabLink key={label} href={`#${icon}`} $active={icon === "data"}>
            <svg width="86" height="88" viewBox="0 0 86 88" aria-hidden="true">{tabIcons[icon]}</svg>
            {label}
          </TabLink>
        ))}
        <Stamp>
          <StampBig>领航</StampBig>
          <StampSide>
            <StampTag>lhdown.com</StampTag>
            <StampSmall>下载</StampSmall>
          </StampSide>
        </Stamp>
      </TabBar>
    </Page>
  );
}
